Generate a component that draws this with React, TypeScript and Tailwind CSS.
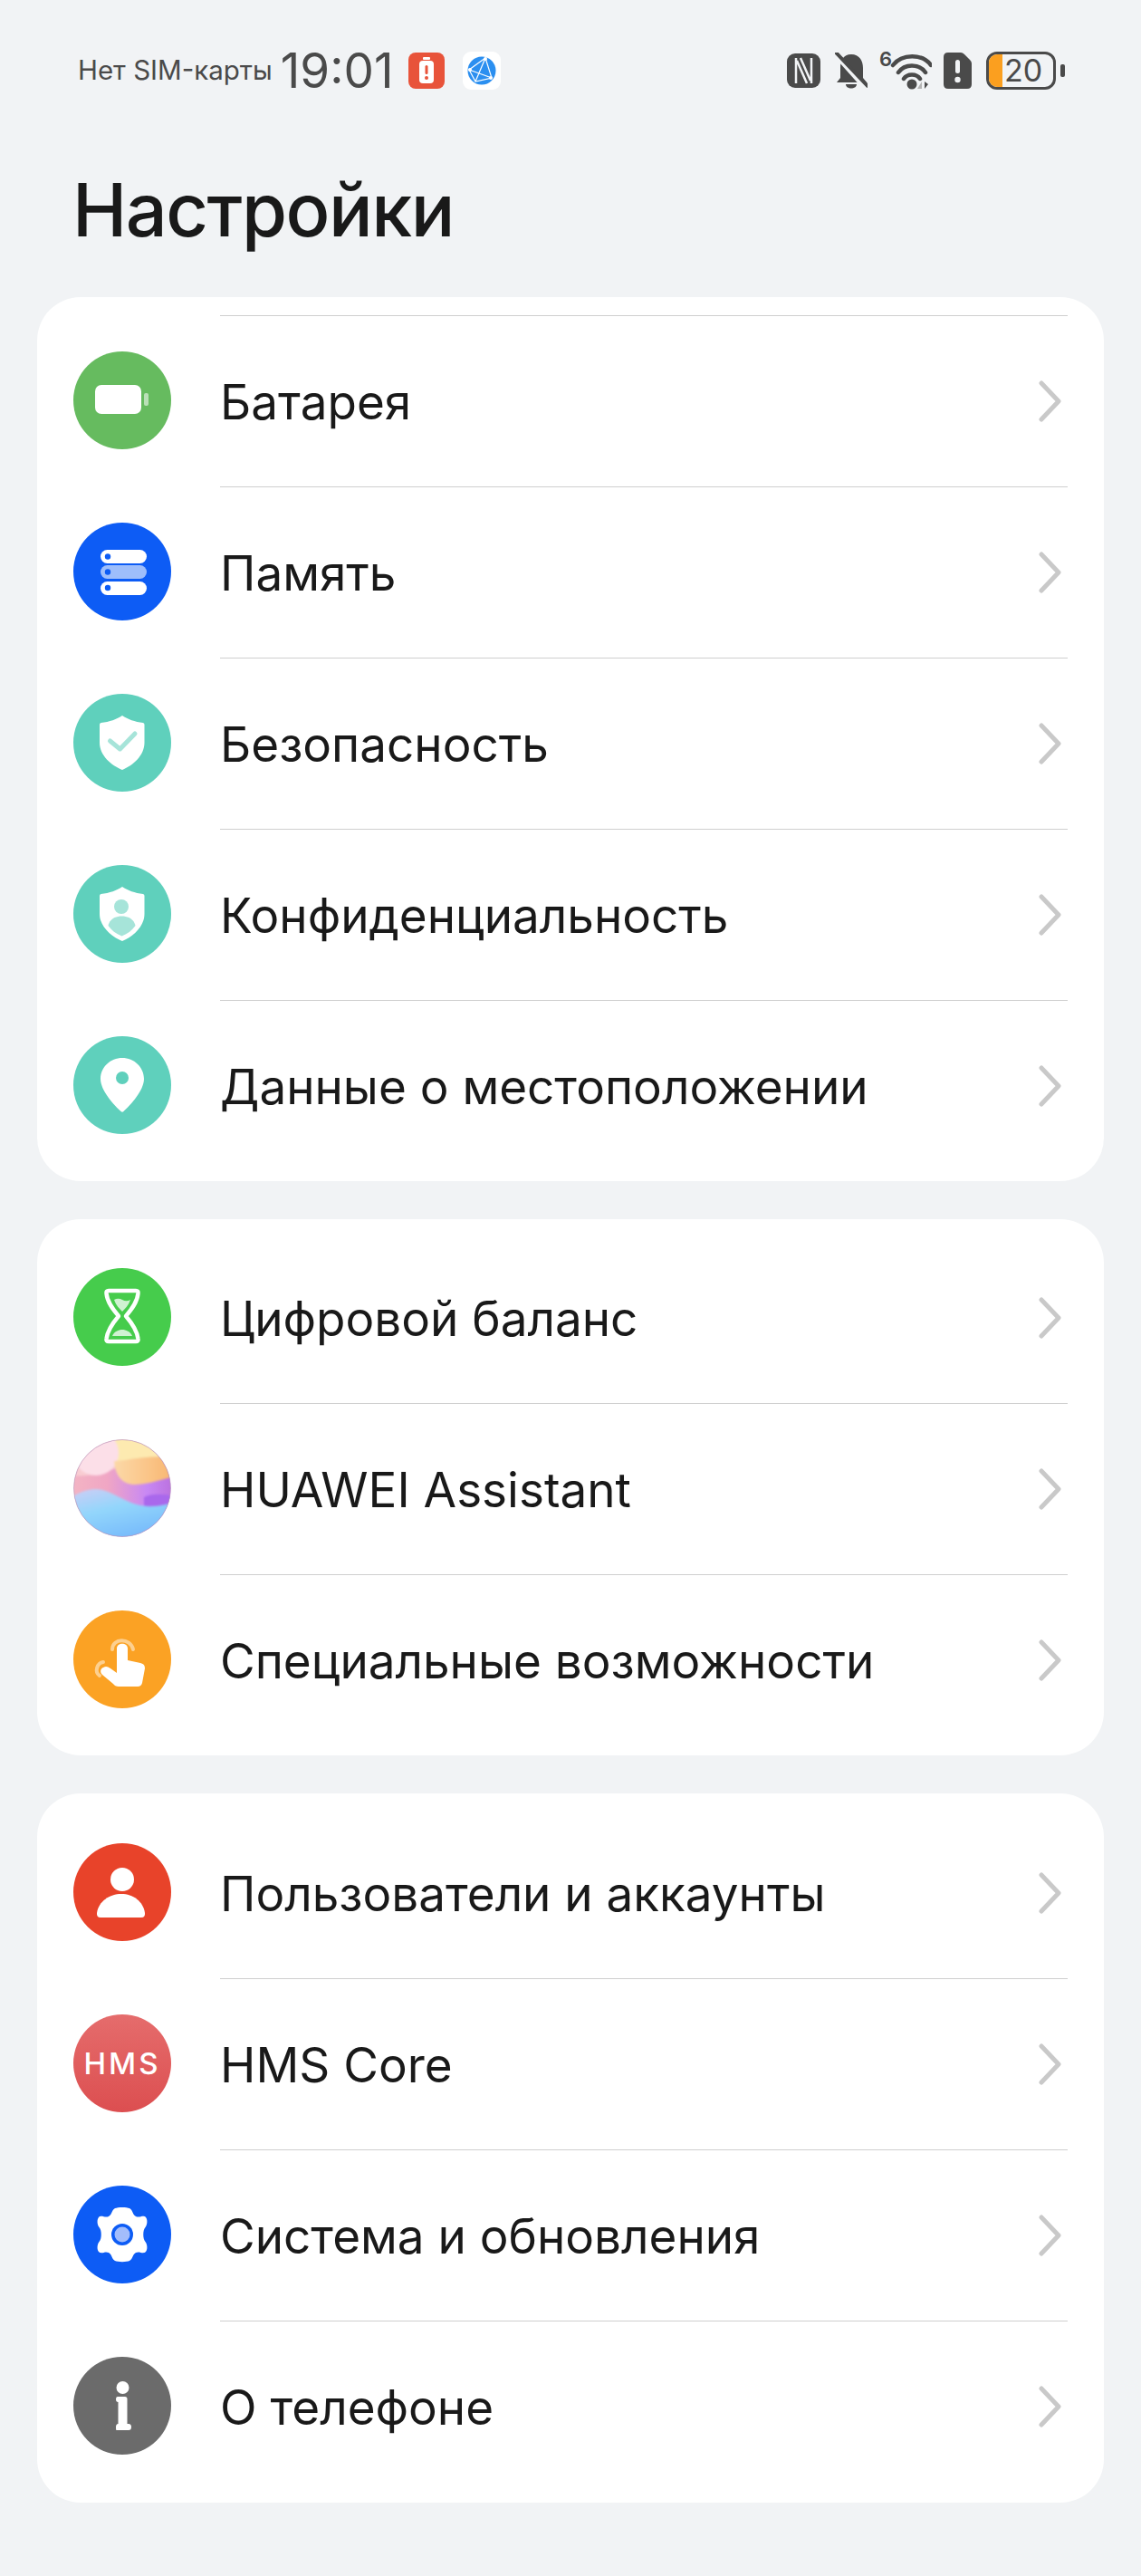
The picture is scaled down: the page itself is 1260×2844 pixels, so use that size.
import React from "react";

const font = "font-['Inter','Noto_Sans',sans-serif]";

function BatteryIcon() {
  return (
    <svg viewBox="0 0 108 108" className="w-full h-full">
      <circle cx="54" cy="54" r="54" fill="#66bb5f" />
      <rect x="24" y="37" width="51" height="32" rx="7" fill="#fff" />
      <rect x="78" y="46" width="5" height="14" rx="2" fill="#fff" fillOpacity="0.55" />
    </svg>
  );
}

function MemoryIcon() {
  return (
    <svg viewBox="0 0 108 108" className="w-full h-full">
      <circle cx="54" cy="54" r="54" fill="#0d5cf5" />
      <rect x="30" y="30" width="51" height="15" rx="7.5" fill="#fff" />
      <rect x="30" y="47" width="51" height="15" rx="7.5" fill="#fff" fillOpacity="0.6" />
      <rect x="30" y="65" width="51" height="15" rx="7.5" fill="#fff" />
      <circle cx="38" cy="37.5" r="3.2" fill="#0d5cf5" />
      <circle cx="38" cy="54.5" r="3.2" fill="#0d5cf5" />
      <circle cx="38" cy="72" r="3.2" fill="#0d5cf5" />
    </svg>
  );
}

const shield = "M54 24 C60 28 68 31 77 32 Q78.500 32.500 78.500 34 L78.500 54 C78.500 68 66 79 54 84 C42 79 29 68 29 54 L29 34 Q29 32.500 30.500 32 C40 31 48 28 54 24 Z";

function SecurityIcon() {
  return (
    <svg viewBox="0 0 108 108" className="w-full h-full">
      <circle cx="54" cy="54" r="54" fill="#5fd0bc" />
      <path d={shield} fill="#fff" />
      <path d="M40.500 52 L51.500 61 L68 44" fill="none" stroke="#a6e4d9" strokeWidth="5" strokeLinecap="round" strokeLinejoin="round" />
    </svg>
  );
}

function PrivacyIcon() {
  return (
    <svg viewBox="0 0 108 108" className="w-full h-full">
      <circle cx="54" cy="54" r="54" fill="#5fd0bc" />
      <path d={shield} fill="#fff" />
      <circle cx="53" cy="46" r="8" fill="#a6e4d9" />
      <path d="M38.500 67 C40 60 46 56.500 53.500 56.500 C61 56.500 67 60 68.500 67 C65 72 60 76 53.500 78.500 C47 76 42 72 38.500 67 Z" fill="#a6e4d9" />
    </svg>
  );
}

function LocationIcon() {
  return (
    <svg viewBox="0 0 108 108" className="w-full h-full">
      <circle cx="54" cy="54" r="54" fill="#5fd0bc" />
      <path d="M54 24 C67 24 78 34 78 47 C78 60 63 76 55.500 83 Q54 84.500 52.500 83 C45 76 30 60 30 47 C30 34 41 24 54 24 Z" fill="#fff" />
      <circle cx="54" cy="46" r="7" fill="#5fd0bc" />
    </svg>
  );
}

function HourglassIcon() {
  return (
    <svg viewBox="0 0 108 108" className="w-full h-full">
      <circle cx="54" cy="54" r="54" fill="#46cc4c" />
      <path d="M39 25 L69 25 Q72 25 71.500 28 C70.500 38 64 46 58 53 C64 60 70.500 70 71.500 78 Q72 81 69 81 L39 81 Q36 81 36.500 78 C37.500 70 44 60 50 53 C44 46 37.500 38 36.500 28 Q36 25 39 25 Z" fill="none" stroke="#fff" strokeWidth="4.500" strokeLinejoin="round" />
      <path d="M45 35 Q49.500 32.500 54 35 Q58.500 37.500 63 35 C61 41 57 45 54 48 C51 45 47 41 45 35 Z" fill="#fff" fillOpacity="0.75" />
      <path d="M43 75 C45 70 50 68 54 68 C58 68 63 70 65 75 Z" fill="#fff" fillOpacity="0.75" />
    </svg>
  );
}

function AssistantIcon() {
  return (
    <svg viewBox="0 0 108 108" className="w-full h-full">
      <defs>
        <clipPath id="ball">
          <circle cx="54" cy="54" r="53.500" />
        </clipPath>
        <filter id="soft" x="-10%" y="-10%" width="120%" height="120%">
          <feGaussianBlur stdDeviation="1.200" />
        </filter>
        <linearGradient id="baseTop" x1="0" y1="0" x2="1" y2="0">
          <stop offset="0" stopColor="#f3b4c4" />
          <stop offset="0.350" stopColor="#f0a6c4" />
          <stop offset="0.750" stopColor="#c888f4" />
          <stop offset="1" stopColor="#bb72e0" />
        </linearGradient>
        <linearGradient id="orangeBand" x1="0" y1="0" x2="1" y2="0">
          <stop offset="0" stopColor="#fcd9a8" />
          <stop offset="1" stopColor="#f8b56f" />
        </linearGradient>
        <linearGradient id="blueBand" x1="0" y1="0" x2="0.500" y2="1">
          <stop offset="0" stopColor="#cfcdf6" />
          <stop offset="0.450" stopColor="#93d6fb" />
          <stop offset="1" stopColor="#76bafb" />
        </linearGradient>
      </defs>
      <g clipPath="url(#ball)">
        <rect width="108" height="108" fill="url(#baseTop)" />
        <g filter="url(#soft)">
          <path d="M-4 -4 L50 -4 L50 30 C40 36 20 42 -4 40 Z" fill="#f8ccd2" />
          <path d="M40 -4 L112 -4 L112 24 L45 26 Z" fill="#fdeab0" />
          <circle cx="25" cy="15" r="25" fill="#fcdfe8" />
          <path d="M45 24 C60 24 85 16 112 21 L112 41 C92 46 80 50 68 50 C54 50 46 40 45 24 Z" fill="url(#orangeBand)" />
          <path d="M78 64 C86 60 98 60 112 63 L112 80 L78 80 Z" fill="#a968ec" />
          <path d="M-4 65 C10 56 22 53 32 56 C48 60 60 72 80 74 C90 75 100 73 112 70 L112 112 L-4 112 Z" fill="url(#blueBand)" />
        </g>
      </g>
      <circle cx="54" cy="54" r="53.500" fill="none" stroke="#b593b8" strokeOpacity="0.600" strokeWidth="1" />
    </svg>
  );
}

function AccessIcon() {
  return (
    <svg viewBox="0 0 108 108" className="w-full h-full">
      <circle cx="54" cy="54" r="54" fill="#fba224" />
      <path d="M43 43 C43 30 63 30 66 43" fill="none" stroke="#fdd08f" strokeWidth="4" strokeLinecap="round" />
      <path d="M29 72 C23 68 26 58 33 57" fill="none" stroke="#fdd08f" strokeWidth="4" strokeLinecap="round" />
      <path d="M48 42 C48 35 60 35 60 42 L60 55 L74 58 C78 59 79 61 79 64 L76 80 Q75 84 71 84 L50 84 Q46 84 44 81 L32 71 C29 68 30 64 33 63 C36 61 38 62 41 64 L48 69 Z" fill="#fff" />
    </svg>
  );
}

function UserIcon() {
  return (
    <svg viewBox="0 0 108 108" className="w-full h-full">
      <circle cx="54" cy="54" r="54" fill="#e8432a" />
      <circle cx="54" cy="40" r="13" fill="#fff" />
      <path d="M26 77 C28 64 40 56 53 56 C66 56 77 64 79 77 Q79.500 82 75 82 L30 82 Q25.500 82 26 77 Z" fill="#fff" />
    </svg>
  );
}

function HmsIcon() {
  return (
    <div className="w-full h-full rounded-full bg-gradient-to-b from-[#e56c6c] to-[#dc4e50] flex items-center justify-center">
      <span className={`text-white text-[33px] font-medium tracking-[3px] leading-none ${font}`}>HMS</span>
    </div>
  );
}

function SystemIcon() {
  return (
    <svg viewBox="0 0 108 108" className="w-full h-full">
      <circle cx="54" cy="54" r="54" fill="#0d5cf5" />
      <path d="M46 25 C49 23.500 59 23.500 62 25 C66 27 65 32 69 34 C73 36 77 32 80 35 C82 37 82 43 79.500 46 C76.500 49 76.500 59 79.500 62 C82 65 82 71 80 73 C77 76 73 72 69 74 C65 76 66 81 62 83 C59 84.500 49 84.500 46 83 C42 81 43 76 39 74 C35 72 31 76 28 73 C26 71 26 65 28.500 62 C31.500 59 31.500 49 28.500 46 C26 43 26 37 28 35 C31 32 35 36 39 34 C43 32 42 27 46 25 Z" fill="#fff" />
      <circle cx="54" cy="54" r="12" fill="#0d5cf5" />
      <circle cx="54" cy="54" r="8.500" fill="#a3bdfb" />
    </svg>
  );
}

function InfoIcon() {
  return (
    <svg viewBox="0 0 108 108" className="w-full h-full">
      <circle cx="54" cy="54" r="54" fill="#6b6b6b" />
      <circle cx="54.500" cy="34" r="7" fill="#fff" />
      <path d="M49 44 L57 44 Q59.500 44 59.500 46.500 L59.500 74 L61 74 Q64 74 64 77.500 Q64 81 61 81 L47.500 81 Q47 81 47 77.500 Q47 74 49.500 74 L49.500 50 Q47 50 47 47 Q47 44 49 44 Z" fill="#fff" />
    </svg>
  );
}

function Chevron() {
  return (
    <svg width="26" height="48" viewBox="0 0 26 48" className="shrink-0">
      <path d="M3 4 L22 24 L3 44" fill="none" stroke="#c9c9c9" strokeWidth="5" strokeLinecap="round" strokeLinejoin="round" />
    </svg>
  );
}

function Row({ icon, label, line = true }: { icon: React.ReactNode; label: string; line?: boolean }) {
  return (
    <div className="flex items-stretch h-[189px]">
      <div className="w-[108px] h-[108px] shrink-0 ml-[40px] mt-[40px]">{icon}</div>
      <div className={`flex-1 ml-[54px] mr-[40px] flex items-center justify-between pr-[6px] border-t ${line ? "border-[#cfcfcf]" : "border-transparent"}`}>
        <span className={`text-[53px] text-[#191919] leading-none pt-[3px] ${font}`}>{label}</span>
        <Chevron />
      </div>
    </div>
  );
}

function StatusBar() {
  return (
    <div className="flex items-center justify-between h-[42px] ml-[86px] mr-[84px] text-[#4a4a4a]">
      <div className="flex items-center">
        <span className={`text-[29.500px] leading-none ${font}`}>Нет SIM-карты</span>
        <span className={`text-[53px] leading-none ml-[9px] ${font}`}>19:01</span>
        <svg width="40" height="40" viewBox="0 0 40 40" className="ml-[17px]">
          <rect width="40" height="40" rx="8" fill="#e8533a" />
          <rect x="16" y="5" width="8" height="3" rx="1" fill="#fff" />
          <rect x="12" y="9" width="16" height="25" rx="4" fill="#fff" />
          <rect x="18.500" y="14" width="3" height="10" rx="1.500" fill="#e8533a" />
          <circle cx="20" cy="28" r="2" fill="#e8533a" />
        </svg>
        <svg width="42" height="42" viewBox="0 0 42 42" className="ml-[20px]">
          <rect width="42" height="42" rx="9" fill="#fff" />
          <circle cx="21" cy="21" r="15.500" fill="#2b8ff0" />
          <path d="M7 20 L25 7 L32 29 L14 33 Z M7 20 L32 29 M25 7 L14 33" fill="none" stroke="#fff" strokeWidth="1.200" />
          <circle cx="25" cy="8" r="2" fill="#fff" />
          <circle cx="8" cy="20" r="2" fill="#fff" />
          <circle cx="31" cy="29" r="2" fill="#fff" />
        </svg>
      </div>
      <div className="flex items-center">
        <svg width="37" height="38" viewBox="0 0 37 38">
          <rect width="37" height="38" rx="9" fill="#4a4a4a" />
          <path d="M10 5 L10 33 M27 5 L27 33 M11 8 L22 33 M15 5 L26 30" fill="none" stroke="#f1f3f5" strokeWidth="2.500" />
        </svg>
        <svg width="36" height="40" viewBox="0 0 36 40" className="ml-[16px]">
          <path d="M18 2 C27 2 31 9 31 17 L31 28 L35 33 L2 33 L6 28 L6 17 C6 9 9 2 18 2 Z M12 35 L24 35 C24 41 12 41 12 35 Z" fill="#4a4a4a" />
          <path d="M1 2 L34 39" stroke="#f1f3f5" strokeWidth="6" />
          <path d="M2 1 L36 37" stroke="#4a4a4a" strokeWidth="4" strokeLinecap="round" />
        </svg>
        <div className="relative ml-[13px] w-[58px] h-[42px]">
          <span className={`absolute left-0 top-[-3px] text-[22px] leading-[22px] font-semibold ${font}`}>6</span>
          <svg width="58" height="42" viewBox="0 0 58 42" className="absolute inset-0">
            <path d="M15 15 C25 2 48 2 57 15 M21 23 C28 13 44 13 51 23 M27 30 C31 24 41 24 45 30" fill="none" stroke="#4a4a4a" strokeWidth="4.500" strokeLinecap="round" />
            <circle cx="36" cy="36" r="5.500" fill="#4a4a4a" />
            <path d="M47 41 L47 33 L42 41 Z" fill="#b4b4b4" />
            <path d="M50 33 L50 41 L54 36 Z" fill="#4a4a4a" />
          </svg>
        </div>
        <svg width="31" height="40" viewBox="0 0 31 40" className="ml-[13px]">
          <path d="M5 0 L19 0 Q21 0 23 2 L29 8 Q31 10 31 12 L31 35 Q31 40 26 40 L5 40 Q0 40 0 35 L0 5 Q0 0 5 0 Z" fill="#4a4a4a" />
          <rect x="13" y="8" width="5" height="15" rx="2.500" fill="#f1f3f5" />
          <circle cx="15.500" cy="30" r="3.200" fill="#f1f3f5" />
        </svg>
        <div className="relative ml-[16px] w-[77px] h-[42px] rounded-[12px] border-[3px] border-[#4a4a4a] overflow-hidden">
          <div className="absolute left-0 top-0 bottom-0 w-[15px] bg-[#fb9f1f]" />
          <span className={`absolute left-[17px] top-[3px] text-[34px] leading-[30px] ${font}`}>20</span>
        </div>
        <div className="ml-[5px] w-[5px] h-[14px] rounded-[2px] bg-[#4a4a4a]" />
      </div>
    </div>
  );
}

export default function App() {
  return (
    <div className="w-[1260px] h-[2844px] bg-[#f1f3f5] overflow-hidden pt-[57px]">
      <StatusBar />
      <h1 className={`ml-[80px] mt-[86px] text-[81px] leading-[94px] font-medium tracking-[-1.500px] text-[#191919] ${font}`}>Настройки</h1>
      <div className="mx-[41px] w-[1178px] mt-[49px] flex flex-col gap-[42px]">
        <div className="bg-white rounded-[48px] pt-[20px] pb-[11px]">
          <Row icon={<BatteryIcon />} label="Батарея" />
          <Row icon={<MemoryIcon />} label="Память" />
          <Row icon={<SecurityIcon />} label="Безопасность" />
          <Row icon={<PrivacyIcon />} label="Конфиденциальность" />
          <Row icon={<LocationIcon />} label="Данные о местоположении" />
        </div>
        <div className="bg-white rounded-[48px] pt-[14px] pb-[11px]">
          <Row icon={<HourglassIcon />} label="Цифровой баланс" line={false} />
          <Row icon={<AssistantIcon />} label="HUAWEI Assistant" />
          <Row icon={<AccessIcon />} label="Специальные возможности" />
        </div>
        <div className="bg-white rounded-[48px] pt-[15px] pb-[12px]">
          <Row icon={<UserIcon />} label="Пользователи и аккаунты" line={false} />
          <Row icon={<HmsIcon />} label="HMS Core" />
          <Row icon={<SystemIcon />} label="Система и обновления" />
          <Row icon={<InfoIcon />} label="О телефоне" />
        </div>
      </div>
    </div>
  );
}
